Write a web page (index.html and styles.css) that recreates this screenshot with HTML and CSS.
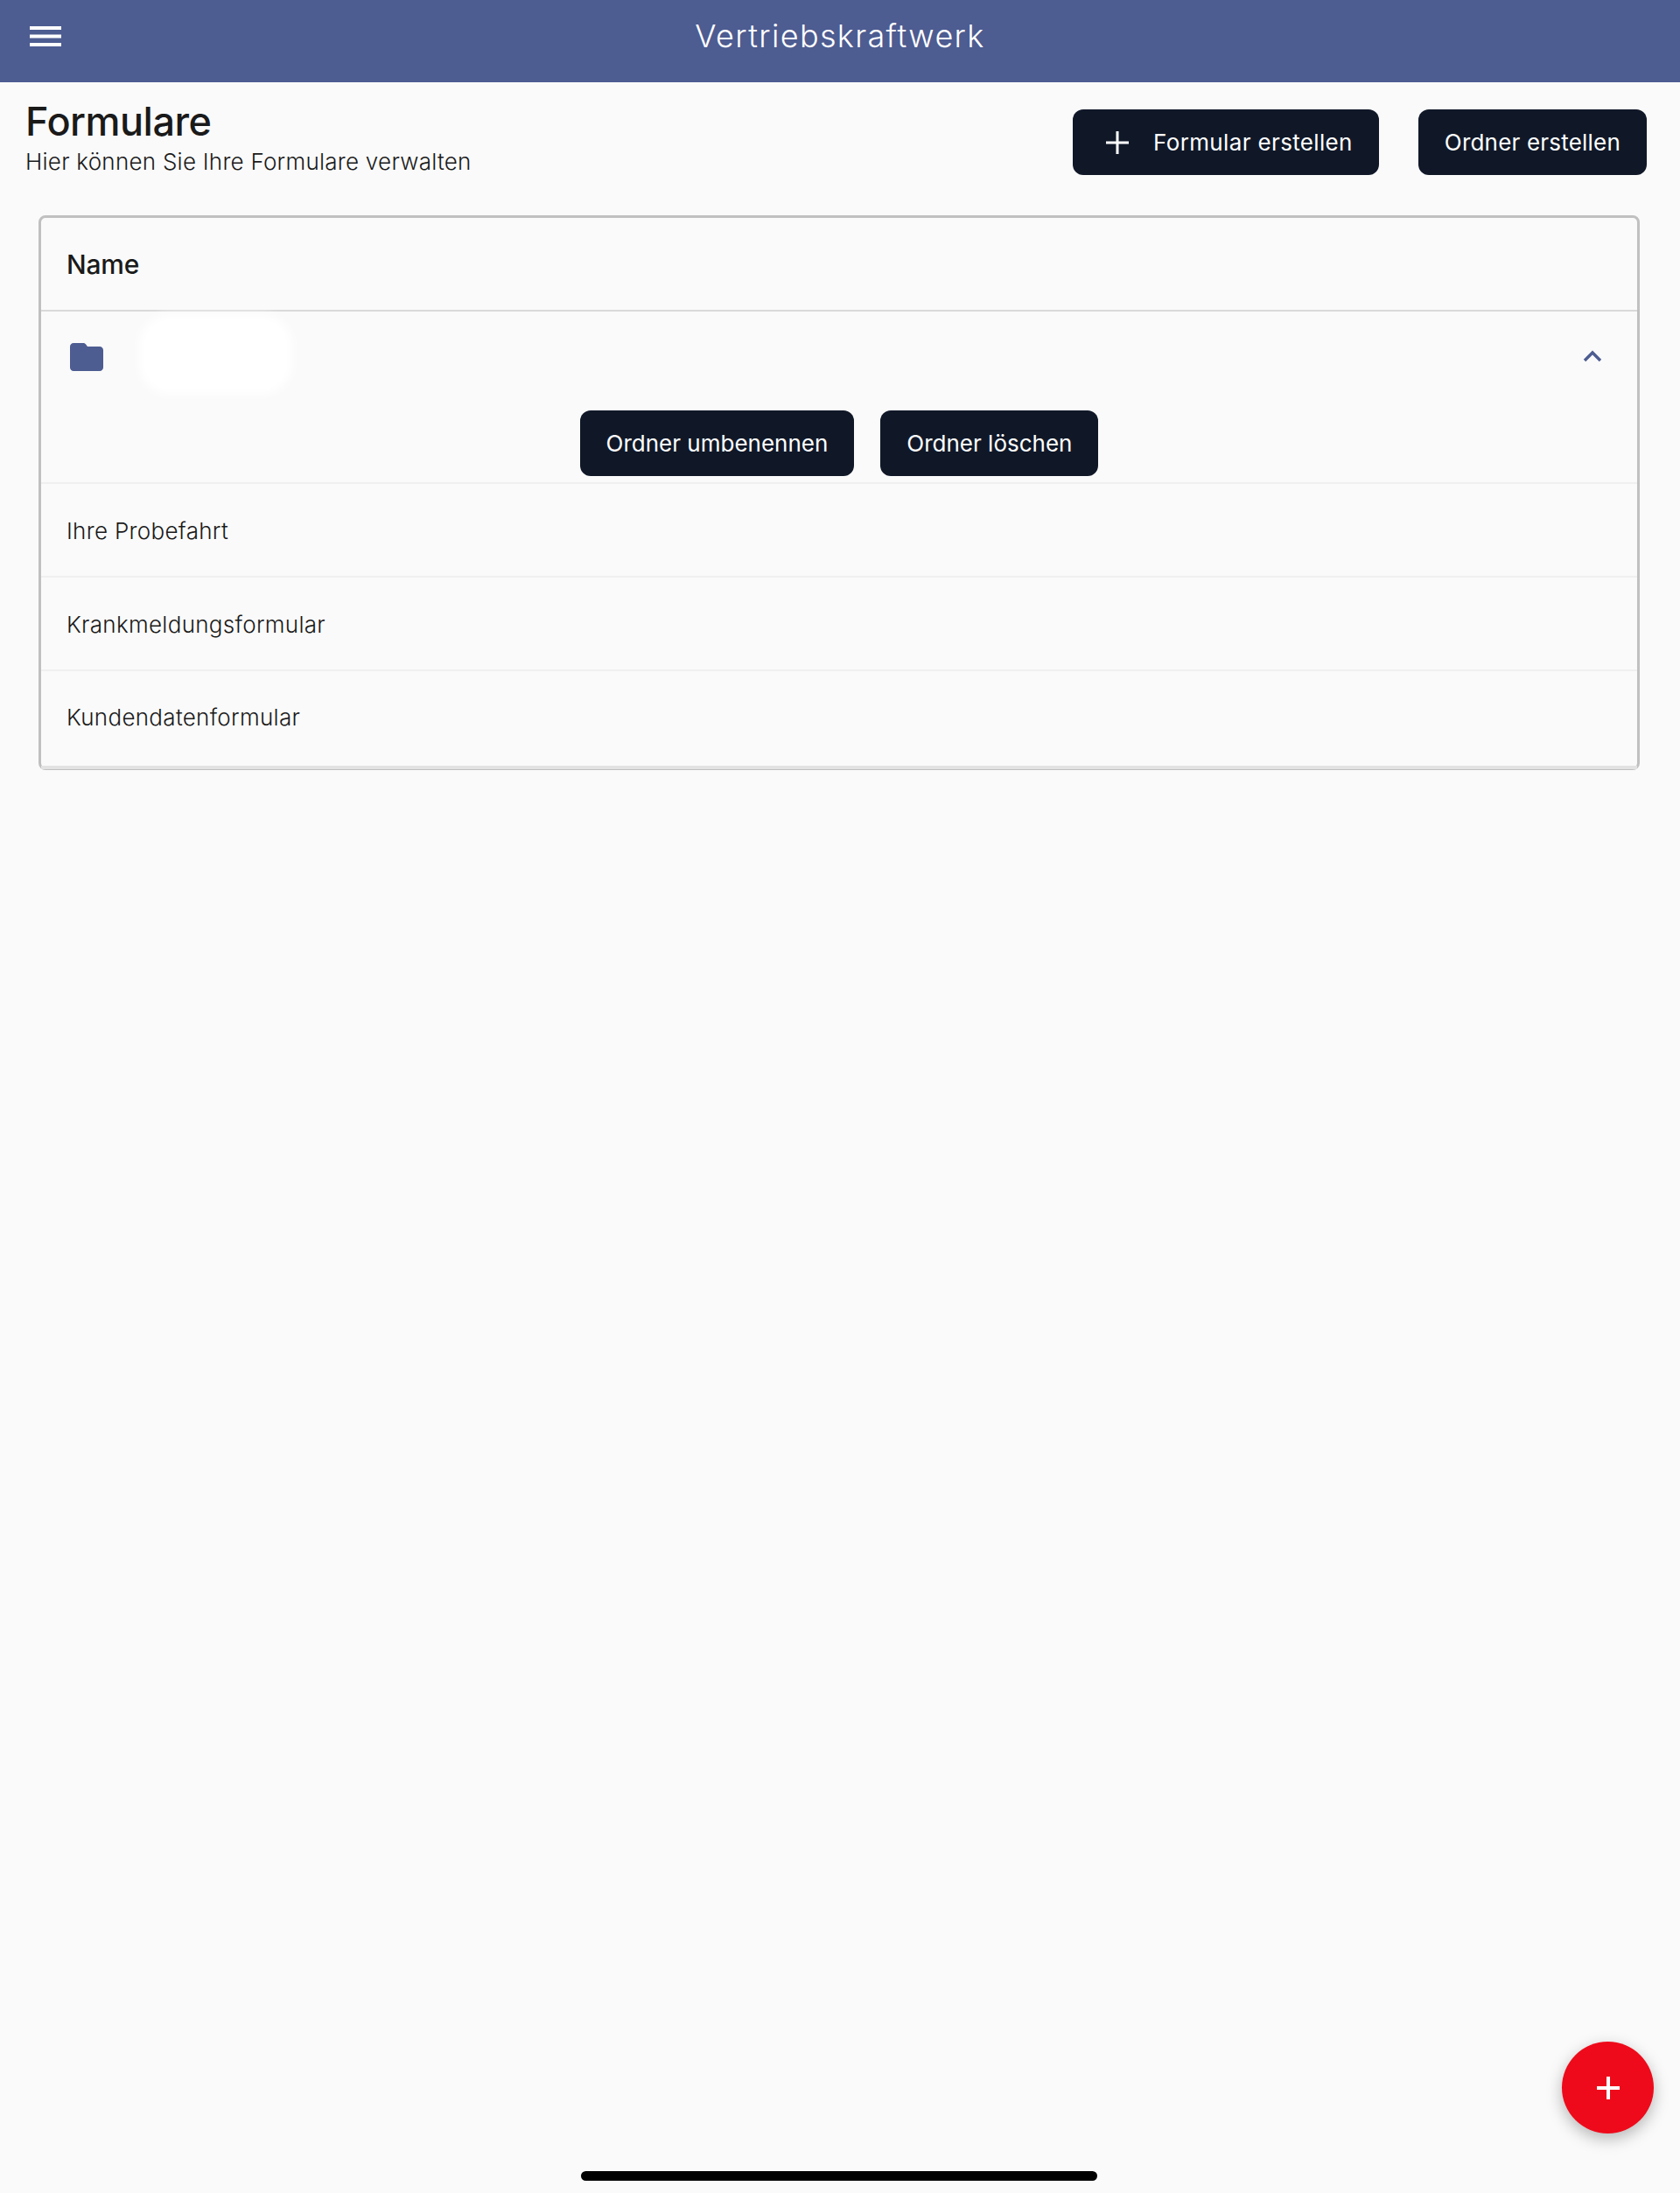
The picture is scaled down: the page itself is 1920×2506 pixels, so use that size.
FILE: index.html
```html
<!DOCTYPE html>
<html lang="de">
<head>
    <title>Formulare - Vertriebskraftwerk</title>
    <link rel="stylesheet" href="styles.css">
</head>
<body>
    <header class="topbar">
        <button class="menu-btn" aria-label="Menü">
            <svg width="36" height="23" viewBox="0 0 36 23"><path d="M0 0h36v4H0zM0 9.500h36v4H0zM0 19h36v4H0z" fill="#fff"/></svg>
        </button>
        <div class="app-title">Vertriebskraftwerk</div>
    </header>

    <div class="page-head">
        <div class="page-title">
            <h1>Formulare</h1>
            <p>Hier können Sie Ihre Formulare verwalten</p>
        </div>
        <div class="page-actions">
            <button class="btn btn-icon">
                <svg width="28" height="28" viewBox="0 0 28 28"><path d="M12.500 1h3v11.500H27v3H15.500V27h-3V15.500H1v-3h11.500z" fill="#fff"/></svg>
                Formular erstellen
            </button>
            <button class="btn">Ordner erstellen</button>
        </div>
    </div>

    <section class="card">
        <div class="card-head">Name</div>
        <div class="folder">
            <div class="folder-row">
                <svg class="folder-icon" width="38" height="32" viewBox="0 0 38 32"><path d="M4 0h11c1.500 0 2.500.6 3.300 1.700L20 4h14c2.200 0 4 1.800 4 4v20c0 2.200-1.800 4-4 4H4c-2.200 0-4-1.800-4-4V4c0-2.200 1.800-4 4-4z" fill="#4d5c91"/></svg>
                <div class="folder-name"></div>
                <svg class="chevron" width="22" height="14" viewBox="0 0 22 14"><path d="M2 12l9-9 9 9" fill="none" stroke="#4d5c91" stroke-width="3.400"/></svg>
            </div>
            <div class="folder-actions">
                <button class="btn">Ordner umbenennen</button>
                <button class="btn">Ordner löschen</button>
            </div>
        </div>
        <div class="row">Ihre Probefahrt</div>
        <div class="row">Krankmeldungsformular</div>
        <div class="row">Kundendatenformular</div>
    </section>

    <button class="fab" aria-label="Hinzufügen">
        <svg width="28" height="28" viewBox="0 0 28 28"><path d="M12 1h4v11h11v4H16v11h-4V16H1v-4h11z" fill="#fff"/></svg>
    </button>
    <div class="home-bar"></div>
</body>
</html>
```

FILE: styles.css
```css
* { box-sizing: border-box; }
html, body { height: 100%; }
body { margin: 0; background: #fafafa; color: #1a1a1a; font-family: Inter, sans-serif; overflow: hidden; position: relative; }

.topbar { height: 94px; background: #4d5c91; display: flex; align-items: center; justify-content: center; position: relative; padding-bottom: 12px; }
.menu-btn { position: absolute; left: 34px; top: 30px; padding: 0; border: none; background: none; line-height: 0; }
.app-title { color: #fff; font-size: 36px; line-height: 44px; font-weight: 300; letter-spacing: 1.35px; }

.page-head { display: flex; justify-content: space-between; align-items: flex-start; padding: 17px 38px 0 29px; height: 152px; }
.page-title h1 { margin: 0; font-size: 45px; line-height: 56px; font-weight: 500; letter-spacing: -0.5px; color: #1a1a1a; }
.page-title p { margin: 2px 0 0; font-size: 26px; line-height: 32px; font-weight: 300; letter-spacing: 0.25px; color: #1a1a1a; }
.page-actions { display: flex; gap: 45px; padding-top: 14px; }

.btn { height: 75px; padding: 0 30px; border: none; border-radius: 12px; background: #101828; color: #fff; font-family: Inter, sans-serif; font-size: 26px; font-weight: 400; letter-spacing: 0.2px; display: flex; align-items: center; white-space: nowrap; }
.btn-icon { gap: 27px; padding-left: 37px; letter-spacing: 0.35px; }

.card { margin: 0 46px 0 44px; height: 634px; border: 3px solid #c0c0c0; border-radius: 8px; }
.card-head { height: 107px; border-bottom: 2px solid #d9d9d9; padding: 0 29px; display: flex; align-items: center; font-size: 30px; font-weight: 500; letter-spacing: -0.2px; color: #1a1a1a; }

.folder { height: 197px; border-bottom: 2px solid #f0f0f0; }
.folder-row { height: 111px; display: flex; align-items: center; padding: 0 40px 8px 33px; position: relative; }
.folder-name { position: absolute; left: 112px; top: 3px; width: 175px; height: 92px; background: #fff; border-radius: 36px; filter: blur(6px); }
.chevron { margin-left: auto; margin-bottom: 2px; }
.folder-actions { display: flex; justify-content: center; gap: 30px; padding-top: 2px; }
.folder-actions .btn { letter-spacing: 0; }

.row { height: 107px; padding: 0 29px; display: flex; align-items: center; border-bottom: 2px solid #f0f0f0; font-size: 26px; font-weight: 300; letter-spacing: 0.3px; color: #1a1a1a; }
.row:nth-child(3) { padding-top: 2px; }
.row:nth-child(4) { padding-top: 2px; }
.row:last-child { height: 112px; padding-bottom: 4px; border-bottom: 4px solid #e2e2e2; }

.fab { position: absolute; left: 1785px; top: 2333px; width: 105px; height: 105px; padding: 0; border: none; border-radius: 50%; background: #ee0a1a; box-shadow: 0 6px 18px rgba(0, 0, 0, 0.28); display: flex; align-items: center; justify-content: center; }
.home-bar { position: absolute; left: 664px; top: 2481px; width: 590px; height: 11px; border-radius: 6px; background: #000; }
```
